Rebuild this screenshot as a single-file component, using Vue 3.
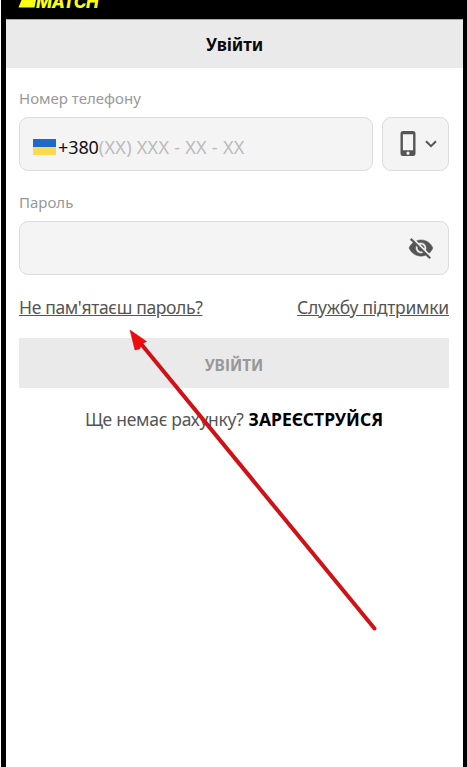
<script setup>
</script>

<template>
  <div class="screen">
    <header class="top">
      <svg class="mark" width="19" height="8" viewBox="0 0 19 8"><path d="M3.500 0H18L16.500 7.500H.5Z" fill="#f8ff13" /></svg>
      <span class="brand">MATCH</span>
    </header>
    <h1 class="title"><span>Увійти</span></h1>
    <main class="form">
      <label class="label"><span>Номер телефону</span></label>
      <div class="row">
        <div class="field phone">
          <svg class="flag" width="23" height="16"><rect width="23" height="8" fill="#1d6bc9" /><rect y="8" width="23" height="8" fill="#fbda4c" /></svg>
          <span class="code">+380</span><span class="mask">(XX) XXX - XX - XX</span>
        </div>
        <button class="field method">
          <svg width="16" height="26" viewBox="0 0 16 26"><path fill="#555" fill-rule="evenodd" d="M3 0H13Q15.500 0 15.500 2.500V22.500Q15.500 25 13 25H3Q.5 25 .5 22.500V2.500Q.5 0 3 0ZM2.900 3.200V19.300H13.100V3.200ZM8 20.600A1.600 1.600 0 1 0 8 23.800A1.600 1.600 0 1 0 8 20.600Z" /></svg>
          <svg width="12" height="8" viewBox="0 0 12 8"><path d="M1 1.200L6 6.200L11 1.200" fill="none" stroke="#555" stroke-width="2" /></svg>
        </button>
      </div>
      <label class="label l-pass"><span>Пароль</span></label>
      <div class="field pass">
        <svg width="26" height="26" viewBox="0 0 24 24"><path fill="#555" stroke="#555" stroke-width=".4" d="M12 7c2.760 0 5 2.240 5 5 0 .65-.13 1.260-.36 1.830l2.920 2.920c1.510-1.260 2.700-2.890 3.430-4.750-1.730-4.390-6-7.500-11-7.500-1.400 0-2.740.25-3.980.7l2.160 2.160C10.740 7.130 11.350 7 12 7zM2 4.270l2.280 2.280.46.46C3.080 8.300 1.780 10.020 1 12c1.730 4.390 6 7.500 11 7.500 1.550 0 3.030-.3 4.380-.84l.42.42L19.730 22 21 20.730 3.270 3 2 4.270zM7.530 9.800l1.550 1.550c-.05.21-.08.43-.08.65 0 1.660 1.340 3 3 3 .22 0 .44-.03.65-.08l1.550 1.550c-.67.33-1.410.53-2.200.53-2.760 0-5-2.240-5-5 0-.79.2-1.530.53-2.200zm4.310-.78l3.150 3.150.02-.16c0-1.660-1.340-3-3-3l-.17.01z" /></svg>
      </div>
      <div class="links"><a class="forgot">Не пам'ятаєш пароль?</a><a class="support">Службу підтримки</a></div>
      <button class="submit"><span>УВІЙТИ</span></button>
      <p class="signup"><span class="ask">Ще немає рахунку?</span><b>ЗАРЕЄСТРУЙСЯ</b></p>
    </main>
    <svg class="arrow" width="467" height="767"><path d="M142 345L374.500 628.500" stroke="#d01217" stroke-width="4" stroke-linecap="round" /><path d="M130 330L146.500 341.500L142 344L139.500 349L135 350Z" fill="#f00a0a" stroke="#c4161c" stroke-width=".6" /></svg>
  </div>
</template>

<style>
body { margin: 0; background: #fff; }
</style>
<style scoped>
* { box-sizing: border-box; }
.screen { position: relative; width: 466px; height: 767px; margin-left: 1px; overflow: hidden; background: #fff; border-left: 5px solid #000; border-right: 4px solid #000; font-family: "Noto Sans", "Open Sans", sans-serif; }
.top { height: 19px; background: #000; display: flex; align-items: flex-start; padding-left: 12px; overflow: hidden; }
.mark { flex: none; }
.brand { font: italic 800 17px/17px Inter, sans-serif; color: #f8ff13; margin: -6.5px 0 0 -1px; letter-spacing: -.3px; }
.title { margin: 0; height: 49px; background: #eaeaea; border-top: 1px solid #aaa; display: flex; align-items: center; justify-content: center; font-size: 17px; font-weight: 700; color: #080808; line-height: 24px; padding-top: 2px; letter-spacing: -.1px; }
.form { padding: 18px 14px 0 13px; }
.label { display: block; font-size: 15px; line-height: 24px; height: 31px; color: #999; }
.row { display: flex; gap: 9px; }
.field { flex: none; height: 54px; background: #f4f4f4; border: 1px solid #dcdcdc; border-radius: 9px; display: flex; align-items: center; }
.phone { width: 354px; padding: 5px 0 0 13px; font-size: 18px; white-space: pre; }
.flag { margin-right: 2px; }
.code { color: #111; letter-spacing: -.1px; }
.mask { color: #bbb; letter-spacing: .28px; }
.method { width: 67px; padding: 0 0 0 17px; gap: 9px; }
.l-pass { margin-top: 19px; }
.pass { justify-content: flex-end; padding-right: 14px; }
.links { display: flex; justify-content: space-between; height: 63px; padding-top: 20px; font-size: 17.5px; line-height: 24px; color: #555; text-decoration: underline; }
.forgot { letter-spacing: -.35px; }
.support { letter-spacing: -.24px; }
.submit { width: 100%; height: 50px; border: 0; background: #eaeaea; color: #999; font: 700 15.5px "Noto Sans", sans-serif; display: flex; align-items: center; justify-content: center; padding-top: 5px; }
.signup { display: flex; justify-content: center; gap: 5px; margin: 19px 0 0; font-size: 17.5px; line-height: 24px; color: #555; white-space: nowrap; }
.ask { letter-spacing: -.27px; }
.signup b { color: #000; }
.arrow { position: absolute; left: -6px; top: 0; pointer-events: none; }
</style>
